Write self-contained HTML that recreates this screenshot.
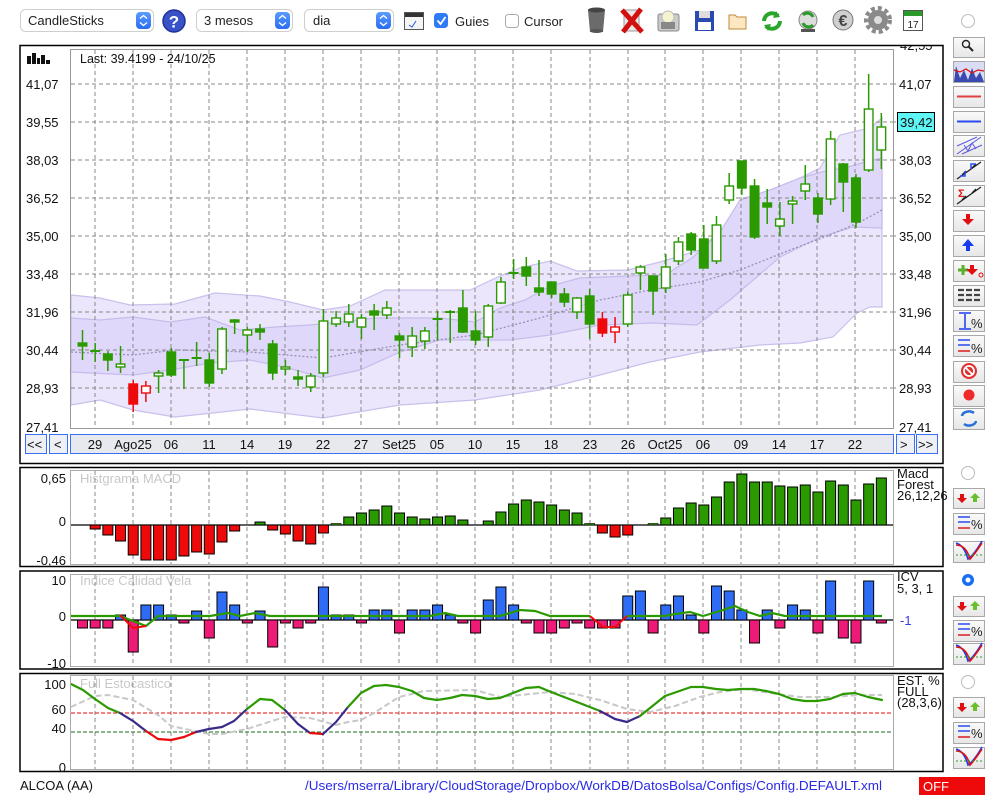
<!DOCTYPE html>
<html><head><meta charset="utf-8">
<style>
html,body{margin:0;padding:0;background:#fff;width:1000px;height:800px;overflow:hidden}
svg{display:block;font-family:"Liberation Sans",sans-serif}
</style></head>
<body>
<svg id="s" width="1000" height="800" viewBox="0 0 1000 800" xmlns="http://www.w3.org/2000/svg">
<defs>
<linearGradient id="btn" x1="0" y1="0" x2="0" y2="1"><stop offset="0" stop-color="#fafafa"/><stop offset="1" stop-color="#e6e6e6"/></linearGradient>
<linearGradient id="sel" x1="0" y1="0" x2="0" y2="1"><stop offset="0" stop-color="#5a9cff"/><stop offset="1" stop-color="#2a6cf0"/></linearGradient>
<clipPath id="mainclip"><rect x="20" y="46" width="923" height="417"/></clipPath>
</defs>

<!-- TOOLBAR -->
<g font-size="13">
<rect x="20.5" y="9.5" width="133" height="22" rx="5" fill="#fff" stroke="#cfcfcf"/>
<text x="28" y="25" fill="#222">CandleSticks</text>
<rect x="136" y="12" width="15" height="17" rx="4" fill="url(#sel)"/>
<path d="M140 18.5l3.5-3 3.5 3M140 22.5l3.5 3 3.5-3" stroke="#fff" stroke-width="1.4" fill="none"/>
<circle cx="174" cy="21" r="11" fill="#3a52c8" stroke="#20309a" stroke-width="1.5"/>
<text x="174" y="27.5" font-size="17" font-weight="bold" fill="#fff" text-anchor="middle">?</text>
<rect x="196.5" y="9.5" width="96" height="22" rx="5" fill="#fff" stroke="#cfcfcf"/>
<text x="204" y="25" fill="#222">3 mesos</text>
<rect x="275" y="12" width="15" height="17" rx="4" fill="url(#sel)"/>
<path d="M279 18.5l3.5-3 3.5 3M279 22.5l3.5 3 3.5-3" stroke="#fff" stroke-width="1.4" fill="none"/>
<rect x="304.5" y="9.5" width="89" height="22" rx="5" fill="#fff" stroke="#cfcfcf"/>
<text x="313" y="25" fill="#222">dia</text>
<rect x="376" y="12" width="15" height="17" rx="4" fill="url(#sel)"/>
<path d="M380 18.5l3.5-3 3.5 3M380 22.5l3.5 3 3.5-3" stroke="#fff" stroke-width="1.4" fill="none"/>
<rect x="404.5" y="12.5" width="19" height="17" fill="#f4f4f4" stroke="#555"/>
<rect x="405" y="13" width="18" height="4" fill="#333"/>
<path d="M409 25l3 2 4-6" stroke="#2a5ad8" fill="none"/>
<rect x="434" y="13" width="14" height="15" rx="3.5" fill="#2f7bf5"/>
<path d="M437.5 20.5l3 3.5 5-7" stroke="#fff" stroke-width="1.8" fill="none"/>
<text x="455" y="26" fill="#222">Guies</text>
<rect x="505.5" y="14.5" width="13" height="13" rx="3" fill="#fff" stroke="#aaa"/>
<text x="524" y="26" fill="#222">Cursor</text>
</g>
<!-- toolbar icons -->
<g>
<path d="M588 10h17l-2 22h-13z" fill="#6b6b6b"/><ellipse cx="596.5" cy="10" rx="8.5" ry="2.5" fill="#444"/><ellipse cx="596.5" cy="31" rx="6.5" ry="2" fill="#555"/>
<rect x="624" y="10" width="15" height="21" fill="#e8e8e8" stroke="#999"/>
<path d="M622 10l20 22M641 9l-18 23" stroke="#d31010" stroke-width="5"/>
<rect x="658" y="14" width="21" height="17" rx="2" fill="#ccc" stroke="#888"/><circle cx="668" cy="17" r="6" fill="#f4f4d0" stroke="#bbb"/><rect x="661" y="22" width="14" height="7" fill="#888"/>
<rect x="695" y="11" width="19" height="20" fill="#2a4ab0"/><rect x="699" y="11" width="11" height="7" fill="#ddd"/><rect x="698" y="22" width="13" height="8" fill="#fff"/>
<path d="M729 15h6l2 2h9v12h-17z" fill="#fbe7c2" stroke="#c08a3a"/>
<path d="M764 21a8 8 0 0 1 14-5M780 21a8 8 0 0 1-14 5" stroke="#2aa62a" stroke-width="4" fill="none"/><path d="M776 11l4 6-7 1zM768 31l-4-6 7-1z" fill="#2aa62a"/>
<circle cx="808" cy="20" r="9" fill="#ddd" stroke="#888"/><path d="M803 15a6 6 0 0 1 10 2M813 25a6 6 0 0 1-10-2" stroke="#2a9a2a" stroke-width="3" fill="none"/><rect x="801" y="29" width="14" height="3" fill="#555"/>
<circle cx="843" cy="20" r="10" fill="#cfcfcf" stroke="#777"/><text x="843" y="26" font-size="16" font-weight="bold" fill="#444" text-anchor="middle">€</text>
<circle cx="878" cy="20" r="10" fill="#8a8a8a"/><circle cx="878" cy="20" r="12" fill="none" stroke="#8a8a8a" stroke-width="4" stroke-dasharray="4 3"/><circle cx="878" cy="20" r="4" fill="#ddd"/>
<rect x="903.5" y="10.5" width="19" height="20" fill="#fff" stroke="#555"/><rect x="904" y="11" width="18" height="5" fill="#2a9a2a"/><text x="913" y="28" font-size="10" fill="#222" text-anchor="middle">17</text>
<circle cx="968" cy="21" r="6.5" fill="#fff" stroke="#bbb"/>
</g>

<!-- MAIN PANEL -->
<rect x="20" y="45.5" width="923" height="418" fill="#fff" stroke="#000" stroke-width="1.5"/>
<g clip-path="url(#mainclip)"><text x="900" y="50" font-size="13" fill="#111">42,55</text></g>
<g id="main"></g>
<rect x="70.5" y="49.5" width="823" height="379" fill="none" stroke="#999"/>
<g fill="#111"><rect x="27" y="56" width="4" height="8"/><rect x="32" y="53" width="4" height="11"/><rect x="37" y="58" width="3" height="6"/><rect x="41" y="55" width="4" height="9"/><rect x="46" y="60" width="4" height="4"/></g>
<text x="80" y="63" font-size="12.5" fill="#111">Last: 39.4199 - 24/10/25</text>
<g id="plabels" font-size="13" fill="#111"></g>
<rect x="897.5" y="112.5" width="37" height="19" fill="#5ff5f5" stroke="#000"/>
<text x="900" y="127" font-size="13" fill="#111">39,42</text>
<!-- nav -->
<g font-size="13" fill="#111">
<rect x="25.5" y="434.5" width="21" height="19" fill="#eef0f6" stroke="#3a6ef5"/><text x="27" y="449">&lt;&lt;</text>
<rect x="49.5" y="434.5" width="18" height="19" fill="#eef0f6" stroke="#3a6ef5"/><text x="54" y="449">&lt;</text>
<rect x="70.5" y="434.5" width="823" height="19" fill="#e8e9ef" stroke="#3a6ef5"/>
<rect x="896.5" y="434.5" width="18" height="19" fill="#eef0f6" stroke="#3a6ef5"/><text x="900" y="449">&gt;</text>
<rect x="916.5" y="434.5" width="21" height="19" fill="#eef0f6" stroke="#3a6ef5"/><text x="918" y="449">&gt;&gt;</text>
<g id="xlabels" text-anchor="middle"></g>
</g>

<!-- MACD -->
<rect x="20" y="467.5" width="923" height="99" fill="#fff" stroke="#000" stroke-width="1.5"/>
<text x="80" y="483" font-size="13" fill="#c8c8c8">Histgrama MACD</text>
<g id="macd"></g>
<rect x="70.5" y="470.5" width="823" height="94" fill="none" stroke="#aaa"/>
<g font-size="13" fill="#111"><text x="66" y="483" text-anchor="end">0,65</text><text x="66" y="526" text-anchor="end">0</text><text x="66" y="565" text-anchor="end">-0,46</text>
<text x="897" y="478">Macd</text><text x="897" y="489">Forest</text><text x="897" y="500">26,12,26</text></g>

<!-- ICV -->
<rect x="20" y="571" width="923" height="98" fill="#fff" stroke="#000" stroke-width="1.5"/>
<text x="80" y="585" font-size="13" fill="#c8c8c8">Indice Calidad Vela</text>
<g id="icv"></g>
<rect x="70.5" y="574.5" width="823" height="92" fill="none" stroke="#aaa"/>
<g font-size="13" fill="#111"><text x="66" y="585" text-anchor="end">10</text><text x="66" y="621" text-anchor="end">0</text><text x="66" y="668" text-anchor="end">-10</text>
<text x="897" y="581">ICV</text><text x="897" y="593">5, 3, 1</text><text x="900" y="625" fill="#3a3af0">-1</text></g>

<!-- STOCH -->
<rect x="20" y="673.5" width="923" height="98" fill="#fff" stroke="#000" stroke-width="1.5"/>
<text x="80" y="688" font-size="13" fill="#c8c8c8">Full Estocastico</text>
<g id="sto"></g>
<rect x="70.5" y="675.5" width="823" height="94" fill="none" stroke="#aaa"/>
<g font-size="13" fill="#111"><text x="66" y="689" text-anchor="end">100</text><text x="66" y="714" text-anchor="end">60</text><text x="66" y="733" text-anchor="end">40</text><text x="66" y="772" text-anchor="end">0</text>
<text x="897" y="685">EST. %</text><text x="897" y="696">FULL</text><text x="897" y="707">(28,3,6)</text></g>

<!-- footer -->
<text x="20" y="790" font-size="13" fill="#111">ALCOA (AA)</text>
<text x="305" y="790" font-size="13" fill="#2a2ae8" textLength="577" lengthAdjust="spacingAndGlyphs">/Users/mserra/Library/CloudStorage/Dropbox/WorkDB/DatosBolsa/Configs/Config.DEFAULT.xml</text>
<rect x="919" y="777" width="66" height="18" fill="#ee0a0a"/><text x="923" y="791" font-size="13" fill="#fff">OFF</text>

<g id="side"></g>
</svg>
<script>
(function(){
var NS="http://www.w3.org/2000/svg";
function el(p,t,a,txt){var e=document.createElementNS(NS,t);for(var k in a)e.setAttribute(k,a[k]);if(txt!=null)e.textContent=txt;p.appendChild(e);return e;}
function X(i){return 82.5+12.68*i;}
function pts(a){return a.map(function(p){return p[0]+","+p[1]}).join(" ");}
var main=document.getElementById("main");
var ou=[[71,295],[100,298],[130,305],[175,304],[215,293],[260,296],[290,302],[323,310],[350,306],[385,290],[420,290],[470,290],[500,276],[520,268],[550,261],[577,271],[628,270],[660,262],[700,250],[727,224],[745,198],[770,190],[800,178],[820,168],[840,135],[870,128],[882,118]];
var ol=[[882,307],[870,307],[857,313],[833,337],[800,343],[760,345],[700,352],[650,362],[600,375],[540,390],[475,400],[400,405],[323,418],[250,409],[175,417],[133,410],[100,400],[71,405]];
var iu=[[71,318],[100,320],[133,317],[170,322],[205,317],[240,330],[275,327],[310,325],[340,322],[375,318],[400,318],[440,318],[475,322],[500,308],[525,300],[550,286],[580,278],[628,276],[665,275],[692,258],[720,232],[740,200],[770,190],[800,178],[830,170],[845,168],[865,162],[882,158]];
var il=[[882,228],[853,227],[820,237],[780,257],[730,300],[697,325],[653,323],[600,325],[550,335],[510,340],[475,340],[440,340],[400,352],[360,370],[323,378],[285,367],[250,360],[210,363],[170,370],[133,375],[71,372]];
el(main,"polygon",{points:pts(ou.concat(ol)),fill:"#ebe6fc",stroke:"#c9c0ec","stroke-width":1.2});
el(main,"polygon",{points:pts(iu.concat(il)),fill:"#e0d8fa",stroke:"#c6bceb","stroke-width":1.2});
var mid=[[71,352],[133,355],[175,350],[250,352],[323,358],[400,345],[475,335],[540,318],[600,300],[650,290],[700,282],[740,270],[790,250],[830,235],[860,222],[882,210]];
el(main,"polyline",{points:pts(mid),fill:"none",stroke:"#9a90b4","stroke-width":1.3,"stroke-dasharray":"2 2"});
var ys=[84,122,160,198,236,274,312,350,388];
var gx=[95,133,171,209,247,285,323,361,399,437,475,513,551,590,628,665,703,741,779,817,855];
function vgrid(g,y1,y2){gx.forEach(function(x){el(g,"line",{x1:x,y1:y1,x2:x,y2:y2,stroke:"#888","stroke-dasharray":"4 3"});});}
ys.forEach(function(y){el(main,"line",{x1:71,y1:y,x2:893,y2:y,stroke:"#888","stroke-dasharray":"4 3"});});
vgrid(main,50,428);
var pl=document.getElementById("plabels");
var lab=["41,07","39,55","38,03","36,52","35,00","33,48","31,96","30,44","28,93"];
ys.forEach(function(y,i){el(pl,"text",{x:26,y:y+5},lab[i]);if(i!=1)el(pl,"text",{x:899,y:y+5},lab[i]);el(main,"line",{x1:893,y1:y,x2:898,y2:y,stroke:"#888","stroke-dasharray":"3 2"});});
el(pl,"text",{x:26,y:432},"27,41");el(pl,"text",{x:899,y:432},"27,41");
var C=[[330,360,343,346,'g'],[343,362,350,352,'d'],[351,371,354,360,'g'],[346,373,364,367,'w'],[380,412,384,404,'r'],[381,402,386,393,'R'],[370,393,373,376,'w'],[348,377,352,375,'g'],[359,389,359,361,'d'],[342,366,357,359,'d'],[353,387,360,383,'g'],[327,374,329,369,'w'],[319,334,320,322,'g'],[327,352,330,335,'w'],[324,340,329,332,'g'],[340,380,344,373,'g'],[360,375,367,369,'w'],[370,386,377,379,'g'],[373,392,376,387,'w'],[309,377,321,373,'w'],[311,327,318,324,'w'],[304,327,314,322,'w'],[314,339,318,327,'w'],[304,330,311,315,'g'],[301,319,308,315,'w'],[333,358,336,340,'g'],[327,357,336,347,'w'],[327,349,331,341,'w'],[311,340,318,320,'d'],[310,343,311,313,'d'],[290,333,308,332,'g'],[311,345,331,340,'g'],[304,347,306,337,'w'],[277,304,282,303,'w'],[259,279,272,274,'d'],[257,286,267,276,'g'],[260,296,288,292,'g'],[282,298,282,294,'g'],[288,307,294,302,'g'],[297,319,298,312,'w'],[289,339,296,324,'g'],[312,337,319,333,'r'],[317,343,327,332,'R'],[292,327,295,324,'w'],[265,290,267,273,'w'],[276,315,276,291,'g'],[254,293,267,288,'w'],[237,265,242,261,'w'],[232,255,234,250,'g'],[225,268,239,268,'g'],[216,264,225,261,'w'],[173,204,186,200,'w'],[161,195,161,188,'g'],[179,239,186,237,'g'],[189,224,203,207,'g'],[202,236,219,226,'w'],[196,224,201,204,'w'],[165,200,184,191,'w'],[193,223,198,214,'g'],[131,205,139,199,'w'],[163,212,164,182,'g'],[174,228,178,222,'g'],[74,172,109,170,'w'],[113,169,127,150,'w']];
C.forEach(function(c,i){var x=X(i);var col=(c[4]=='r'||c[4]=='R')?"#ee0a0a":"#2a9a00";
el(main,"line",{x1:x,y1:c[0],x2:x,y2:c[1],stroke:col,"stroke-width":1.5});
if(c[4]=='d'){el(main,"line",{x1:x-5,y1:(c[2]+c[3])/2,x2:x+5,y2:(c[2]+c[3])/2,stroke:col,"stroke-width":2});}
else{var f=(c[4]=='g'||c[4]=='r')?col:"#fff";el(main,"rect",{x:x-4.3,y:c[2],width:8.6,height:Math.max(2,c[3]-c[2]),fill:f,stroke:col,"stroke-width":1.4});}
});
var xl=document.getElementById("xlabels");
var xt=["29","Ago25","06","11","14","19","22","27","Set25","05","10","15","18","23","26","Oct25","06","09","14","17","22"];
gx.forEach(function(x,i){el(xl,"text",{x:x,y:449},xt[i]);});
var mg=document.getElementById("macd");vgrid(mg,471,564);
var M=[525,529,535,541,555,560,560,560,556,552,554,542,531,525,522,530,534,541,544,533,524,517,513,510,506,513,517,519,517,516,520,525,521,512,504,500,502,505,510,513,524,533,537,535,525,524,518,508,503,505,497,482,474,482,482,486,487,485,492,481,485,500,484,478];
el(mg,"line",{x1:71,y1:525,x2:893,y2:525,stroke:"#000","stroke-width":1.2});
M.forEach(function(v,i){var x=X(i);if(Math.abs(v-525)<2){if(v!=525)el(mg,"rect",{x:x-5,y:523.5,width:10,height:1.5,fill:"#2a9a00",stroke:"#000","stroke-width":0.6});return;}
var up=v<525;el(mg,"rect",{x:x-5,y:up?v:525,width:10,height:Math.abs(v-525),fill:up?"#2a9a00":"#ee0a0a",stroke:"#000","stroke-width":1});});
var ig=document.getElementById("icv");vgrid(ig,575,667);
var I=[628,628,628,615,652,605,605,615,623,611,638,592,605,623,611,647,623,628,623,587,615,615,623,610,610,633,610,610,605,615,623,633,600,587,605,623,633,633,628,623,628,628,628,596,591,633,605,596,615,633,586,591,610,643,610,628,605,610,633,581,638,643,581,623];
el(ig,"line",{x1:71,y1:620,x2:893,y2:620,stroke:"#000","stroke-width":1.2});
I.forEach(function(v,i){var x=X(i);var up=v<620;el(ig,"rect",{x:x-5,y:up?v:620,width:10,height:Math.abs(v-620),fill:up?"#2f6cf6":"#ee1a78",stroke:"#000","stroke-width":1});});
var gl=[[71,616],[120,616],[146,626],[158,616],[210,616],[228,613],[240,616],[255,613],[270,616],[430,616],[445,613],[458,616],[500,616],[520,610],[535,611],[550,616],[590,616]];
var gl2=[[627,616],[665,616],[675,614],[690,612],[703,616],[720,611],[735,606],[748,612],[760,616],[772,613],[785,616],[882,616]];
el(ig,"polyline",{points:pts(gl),fill:"none",stroke:"#2a9a00","stroke-width":2.2});
el(ig,"polyline",{points:pts(gl2),fill:"none",stroke:"#2a9a00","stroke-width":2.2});
el(ig,"polyline",{points:"120,615 133,628 146,626",fill:"none",stroke:"#ee0a0a","stroke-width":2});
el(ig,"polyline",{points:"590,616 603,627 615,627 627,616",fill:"none",stroke:"#ee0a0a","stroke-width":2});
var sg=document.getElementById("sto");vgrid(sg,676,769);
el(sg,"line",{x1:71,y1:713,x2:893,y2:713,stroke:"#ee0a0a","stroke-dasharray":"4 2"});
el(sg,"line",{x1:71,y1:732,x2:893,y2:732,stroke:"#1e6e1e","stroke-dasharray":"4 2"});
var gr=[[71,707],[95,696],[108,695],[133,700],[158,715],[171,726],[209,734],[222,734],[247,729],[272,721],[285,717],[310,718],[336,725],[348,722],[361,720],[374,713],[399,697],[424,691],[475,690],[500,697],[520,695],[550,692],[575,694],[600,700],[627,709],[650,712],[675,706],[700,697],[720,692],[745,689],[770,693],[800,697],[830,697],[860,695],[882,695]];
el(sg,"polyline",{points:pts(gr),fill:"none",stroke:"#c8c8c8","stroke-width":2,"stroke-dasharray":"6 3"});
var S=[[71,684],[83,690],[95,699],[108,708],[120,713],[133,721],[146,731],[158,739],[171,740],[184,737],[196,732],[209,729],[222,727],[234,721],[247,709],[260,699],[272,700],[285,710],[298,724],[310,733],[323,734],[336,722],[348,707],[361,693],[374,686],[386,685],[399,687],[412,691],[424,698],[437,700],[450,698],[462,695],[475,696],[488,699],[500,698],[526,688],[539,687],[551,692],[564,697],[577,702],[600,711],[615,719],[627,722],[640,716],[665,696],[691,687],[703,687],[716,689],[728,690],[741,689],[754,689],[766,691],[779,694],[792,699],[805,701],[817,701],[830,699],[843,694],[855,693],[868,697],[882,700]];
for(var k=0;k<S.length-1;k++){var a=S[k],b=S[k+1],m=(a[1]+b[1])/2;var c=m<714?"#2a9a00":(m<733?"#3a2a8a":"#ee0a0a");
el(sg,"line",{x1:a[0],y1:a[1],x2:b[0],y2:b[1],stroke:c,"stroke-width":2.2,"stroke-linecap":"round"});}
var sd=document.getElementById("side");
function btn(y1,y2){el(sd,"rect",{x:953.5,y:y1+0.5,width:31,height:y2-y1,fill:"url(#btn)",stroke:"#a8a8a8"});}
var B=[[37,57],[61,82],[86,107],[111,132],[135,156],[160,181],[185,206],[210,231],[235,256],[260,281],[285,306],[310,331],[335,356],[361,382],[385,406],[408,429]];
B.forEach(function(b){btn(b[0],b[1]);});
el(sd,"circle",{cx:966,cy:44,r:3.5,fill:"none",stroke:"#222","stroke-width":1.4});el(sd,"line",{x1:968.5,y1:46.5,x2:973,y2:51,stroke:"#222","stroke-width":2});
el(sd,"rect",{x:954,y:62,width:30,height:20,fill:"#d8dcf4"});el(sd,"polygon",{points:"954,82 956,66 960,78 964,70 968,80 972,68 976,78 980,72 984,82",fill:"#3a4ab0"});el(sd,"polyline",{points:"954,70 960,72 966,69 972,73 978,70 984,71",fill:"none",stroke:"#e01010","stroke-width":1.2});
el(sd,"line",{x1:957,y1:96.5,x2:981,y2:96.5,stroke:"#e04040","stroke-width":2});
el(sd,"line",{x1:957,y1:121.5,x2:981,y2:121.5,stroke:"#2a4af0","stroke-width":2});
el(sd,"path",{d:"M957 154l24-17M957 146l20-9M962 154l20-9M964 145l4 6 4-8 4 6",fill:"none",stroke:"#5a5ae0","stroke-width":1});
el(sd,"path",{d:"M957 179l24-17M962 175l4-4M972 168l4-4",fill:"none",stroke:"#222","stroke-width":1.3});el(sd,"path",{d:"M960 176l5 0 0-5M976 164l-5 0 0 5",fill:"none",stroke:"#2a4af0","stroke-width":1.5});
el(sd,"text",{x:958,y:197,"font-size":11,fill:"#e01010","font-weight":"bold"},"Σ");el(sd,"path",{d:"M957 204l24-17M962 200l4-4M972 193l4-4",fill:"none",stroke:"#222","stroke-width":1.3});
el(sd,"path",{d:"M966 214h4v5h4l-6 6-6-6h4z",fill:"#e01010"});
el(sd,"path",{d:"M968 239l6 7h-4v5h-4v-5h-4z",fill:"#1a3af0"});
el(sd,"path",{d:"M958 270h10M963 265v10",stroke:"#5ab02a","stroke-width":3});el(sd,"path",{d:"M970 265h4v4h4l-6 6-6-6h4z",fill:"#e01010"});el(sd,"circle",{cx:981,cy:275,r:2,fill:"none",stroke:"#e01010"});
el(sd,"path",{d:"M958 290h22M958 295h22M958 300h22",stroke:"#444","stroke-width":2.2,"stroke-dasharray":"6 2"});
el(sd,"path",{d:"M959 313h12M959 329h12M965 314v14",stroke:"#1a3af0","stroke-width":1.5});el(sd,"text",{x:971,y:328,"font-size":13,fill:"#222"},"%");
el(sd,"path",{d:"M958 340h12M958 345h12",stroke:"#2a4af0","stroke-width":1.5});el(sd,"path",{d:"M958 351h12",stroke:"#e05050","stroke-width":2});el(sd,"text",{x:971,y:353,"font-size":13,fill:"#222"},"%");
el(sd,"circle",{cx:969,cy:371,r:8,fill:"#e03030"});el(sd,"circle",{cx:969,cy:371,r:5,fill:"none",stroke:"#fff","stroke-width":1.8});el(sd,"line",{x1:965,y1:367,x2:973,y2:375,stroke:"#fff","stroke-width":1.8});
el(sd,"circle",{cx:969,cy:395,r:5.5,fill:"#ee2a2a"});
el(sd,"path",{d:"M962 416a7 5 0 0 1 12-3M976 421a7 5 0 0 1-12 3",fill:"none",stroke:"#2a70d8","stroke-width":2.5});
function radio(y,on){if(on){el(sd,"circle",{cx:968,cy:y,r:6,fill:"#1a6ef5"});el(sd,"circle",{cx:968,cy:y,r:2.5,fill:"#fff"});}else el(sd,"circle",{cx:968,cy:y,r:6.5,fill:"#fff",stroke:"#bbb"});}
function arrows(y){el(sd,"path",{d:"M960 "+(y-4)+"h4v4h3l-5 5-5-5h3z",fill:"#e01010"});el(sd,"path",{d:"M975 "+(y-5)+"l5 5h-3v4h-4v-4h-3z",fill:"#6ac02a"});}
function pct(y){el(sd,"path",{d:"M958 "+(y-6)+"h12M958 "+(y-1)+"h12",stroke:"#2a4af0","stroke-width":1.5});el(sd,"path",{d:"M958 "+(y+5)+"h12",stroke:"#e05050","stroke-width":2});el(sd,"text",{x:971,y:y+6,"font-size":13,fill:"#222"},"%");}
function vv(y){el(sd,"path",{d:"M956 "+(y-8)+"q8 2 12 16q6-4 14-18",fill:"none",stroke:"#1a3af0","stroke-width":1.6});el(sd,"path",{d:"M956 "+(y-6)+"q10 0 14 14q4-4 12-16",fill:"none",stroke:"#e01010","stroke-width":1.6});el(sd,"line",{x1:956,y1:y+4,x2:983,y2:y+4,stroke:"#2a9a2a","stroke-dasharray":"2 2"});}
[[473,488,513,541,false],[580,596,620,643,true],[682,697,722,747,false]].forEach(function(r){radio(r[0],r[4]);btn(r[1],r[1]+20);btn(r[2],r[2]+21);btn(r[3],r[3]+21);arrows(r[1]+10);pct(r[2]+10);vv(r[3]+10);});
})();
</script>
</body></html>
